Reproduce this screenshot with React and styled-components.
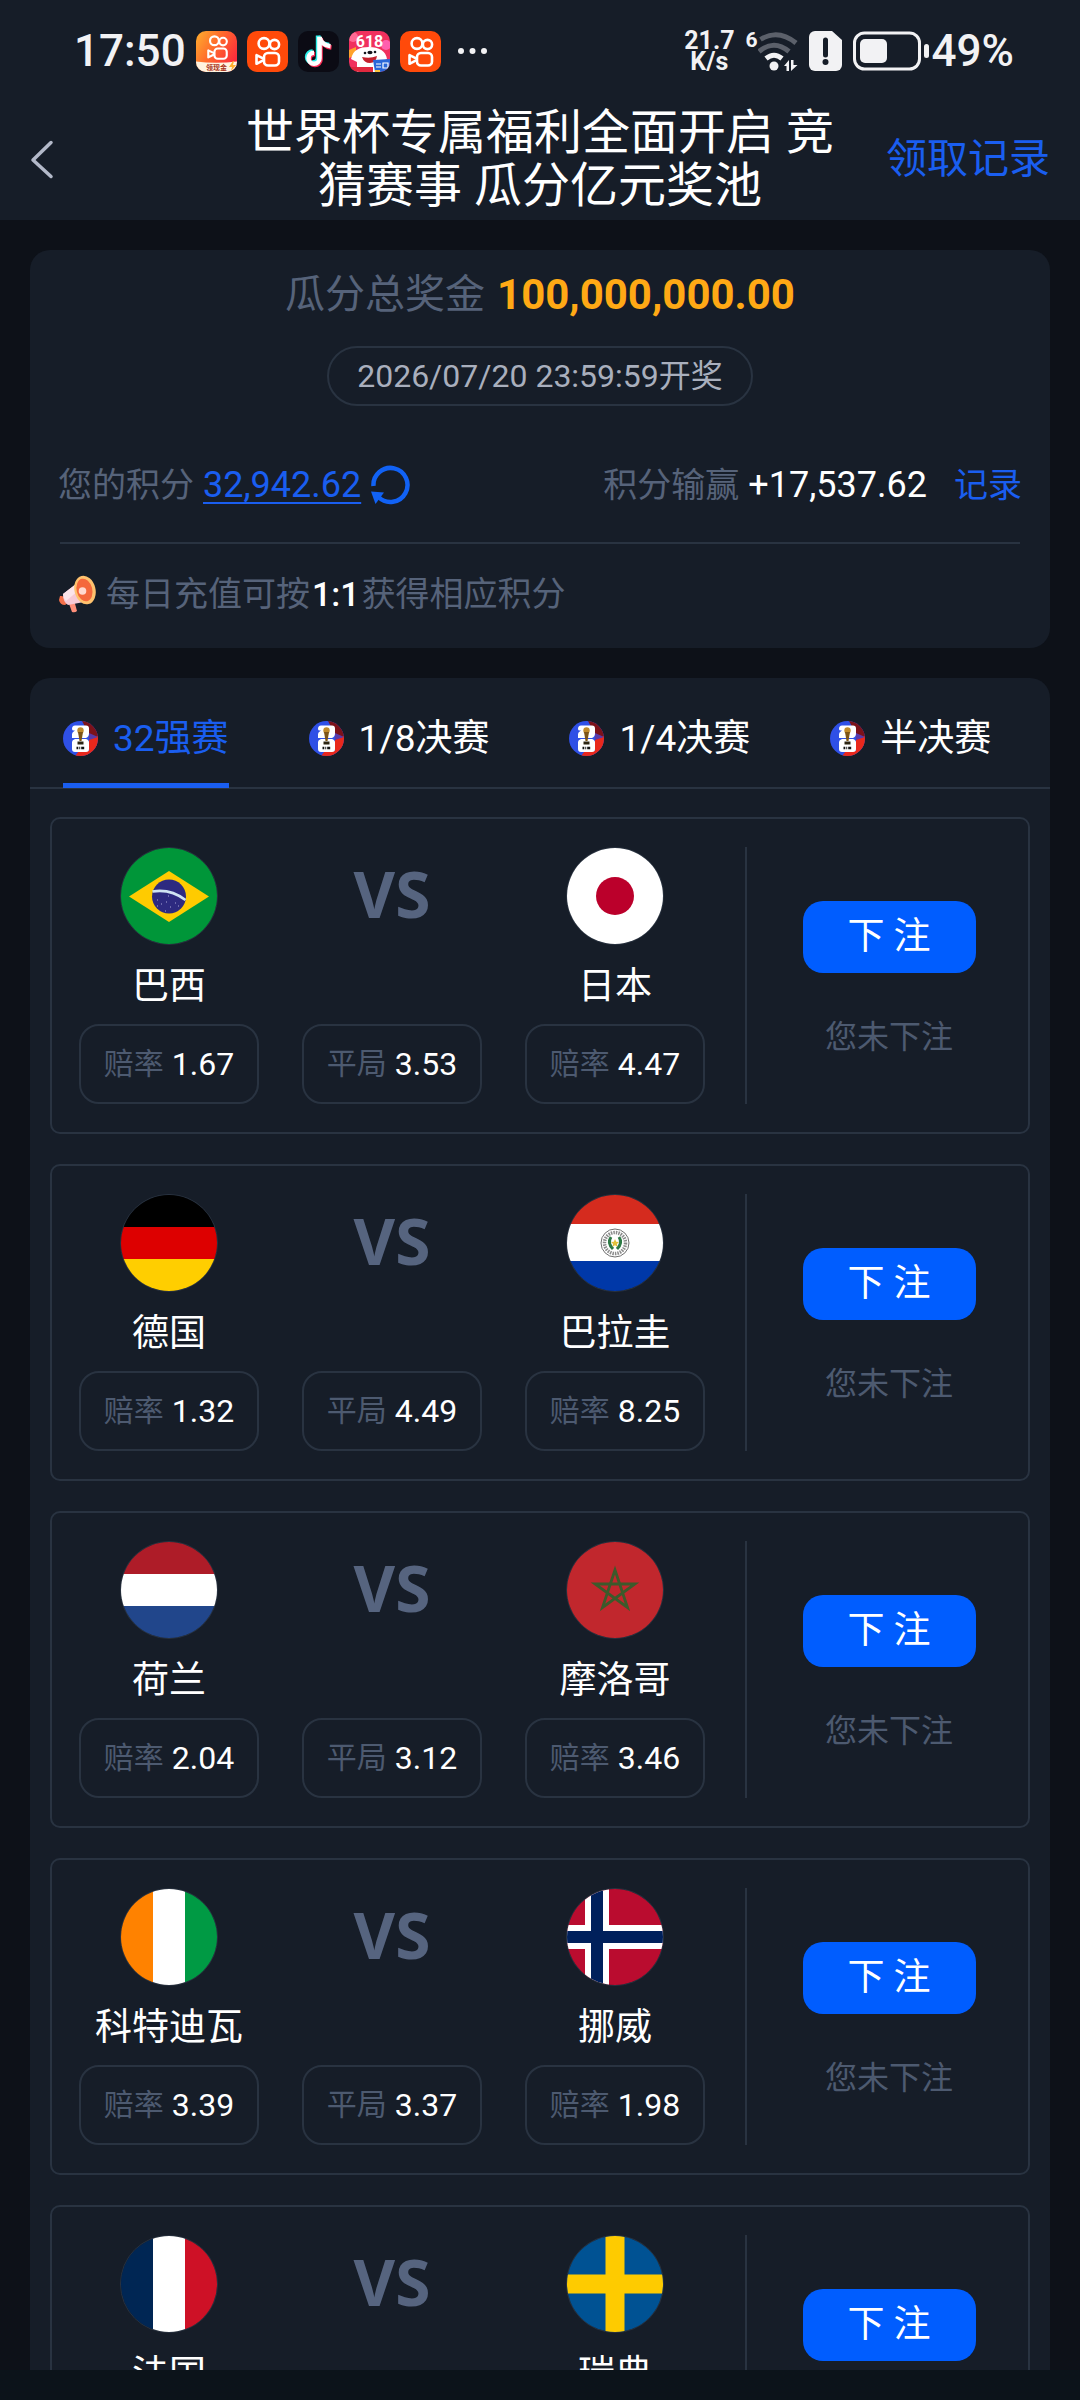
import React, { useId, useState } from "react";
import styled, { createGlobalStyle } from "styled-components";

const c = {
  page: "#0d1118",
  panel: "#161d28",
  line: "#293341",
  muted: "#56637a",
  faint: "#4d5a70",
  blue: "#1a5ef0",
  button: "#005dff",
  white: "#ffffff",
  status: "#f2f2f4",
};

const GlobalStyle = createGlobalStyle`
  * { box-sizing: border-box; }
  body {
    margin: 0;
    background: ${c.page};
    color: ${c.white};
    font-family: Roboto, "Noto Sans CJK SC", sans-serif;
  }
  button { font: inherit; color: inherit; background: none; border: 0; padding: 0; cursor: pointer; }
  a { color: ${c.blue}; text-decoration: none; }
  p, h1 { margin: 0; font-weight: 400; }
  svg { display: block; flex: none; }
`;

const Screen = styled.div`
  height: 100vh;
  display: flex;
  flex-direction: column;
`;

const StatusBar = styled.div`
  flex: none;
  height: 100px;
  padding: 2px 66px 0 74px;
  display: flex;
  justify-content: space-between;
  align-items: center;
  background: ${c.panel};
  color: ${c.status};
`;

const StatusGroup = styled.div`
  display: flex;
  align-items: center;
  gap: ${(p) => p.$gap}px;
`;

const StatusText = styled.span`
  font-size: 44px;
  line-height: 50px;
  font-weight: 500;
`;

const NetSpeed = styled.span`
  display: flex;
  flex-direction: column;
  align-items: center;
  font-size: 25px;
  line-height: 21px;
  font-weight: 700;
`;

const WifiGroup = styled.span`
  display: flex;
  align-items: flex-start;
`;

const WifiGeneration = styled.span`
  font-size: 21px;
  line-height: 20px;
  font-weight: 700;
`;

const Header = styled.header`
  flex: none;
  min-height: 120px;
  padding: 0 30px 2px;
  display: grid;
  grid-template-columns: 1fr auto 1fr;
  align-items: center;
  background: ${c.panel};
`;

const BackButton = styled.button`
  justify-self: start;
`;

const Title = styled.h1`
  max-width: 600px;
  text-align: center;
  font-size: 48px;
  line-height: 53px;
`;

const ClaimLink = styled.a`
  justify-self: end;
  font-size: 41px;
  line-height: 50px;
`;

const Content = styled.main`
  flex: 1;
  min-height: 0;
  padding: 30px 30px 0;
  overflow-y: auto;
  scrollbar-width: none;
`;

const BottomInset = styled.div`
  flex: none;
  height: 30px;
  background: #0c131a;
`;

const Panel = styled.section`
  background: ${c.panel};
  border-radius: 20px;
`;

const PrizePanel = styled(Panel)`
  margin-bottom: 30px;
  padding: 20px 28px 29px;
  display: flex;
  flex-direction: column;
`;

const PrizeTotal = styled.p`
  display: flex;
  justify-content: center;
  align-items: center;
  gap: 12px;
  font-size: 40px;
  line-height: 50px;
  color: ${c.muted};
`;

const PrizeAmount = styled.strong`
  font-size: 42px;
  font-weight: 700;
  color: #ffa915;
`;

const DrawTime = styled.p`
  align-self: center;
  margin-top: 26px;
  padding: 0 28px;
  border: 2px solid ${c.line};
  border-radius: 30px;
  font-size: 32px;
  line-height: 56px;
  color: #a9afbd;
`;

const PointsRow = styled.div`
  margin-top: 54px;
  display: flex;
  justify-content: space-between;
  font-size: 34px;
  line-height: 50px;
  color: ${c.muted};
`;

const PointsGroup = styled.div`
  display: flex;
  align-items: center;
  gap: 9px;
`;

const PointsLink = styled.a`
  font-size: 36px;
  text-decoration: underline;
  text-decoration-thickness: 2px;
  text-underline-offset: 5px;
`;

const PointsDelta = styled.span`
  margin-right: 18px;
  font-size: 36px;
  color: ${c.white};
`;

const Divider = styled.hr`
  width: calc(100% - 4px);
  height: 2px;
  margin: 32px 2px 25px;
  border: 0;
  background: ${c.line};
`;

const Notice = styled.p`
  display: flex;
  align-items: center;
  gap: 10px;
  font-size: 34px;
  line-height: 50px;
  color: ${c.muted};
`;

const Ratio = styled.strong`
  margin: 0 2px;
  font-weight: 500;
  color: ${c.white};
`;

const Tabs = styled.nav`
  padding: 0 33px;
  display: flex;
  gap: 80px;
  border-bottom: 2px solid ${c.line};
`;

const Tab = styled.button`
  height: 110px;
  margin-bottom: -1px;
  padding-top: 16px;
  display: flex;
  align-items: center;
  gap: 15px;
  white-space: nowrap;
  font-size: 37px;
  line-height: 50px;
  color: ${(p) => (p.$active ? c.blue : c.white)};
  border-bottom: 5px solid ${(p) => (p.$active ? c.blue : "transparent")};
`;

const MatchList = styled.div`
  padding: 28px 20px 30px;
  display: flex;
  flex-direction: column;
  gap: 30px;
`;

const MatchCard = styled.article`
  padding: 28px 0 28px 27px;
  display: flex;
  border: 2px solid ${c.line};
  border-radius: 10px;
`;

const Sides = styled.div`
  flex: 1;
  padding-right: 40px;
  display: grid;
  grid-template-columns: repeat(3, minmax(0, 1fr));
  column-gap: 43px;
`;

const Side = styled.div`
  display: flex;
  flex-direction: column;
  align-items: center;
`;

const Flag = styled.span`
  width: 98px;
  height: 98px;
  border: 1px solid ${c.line};
  border-radius: 50%;
  overflow: hidden;
`;

const TeamName = styled.span`
  margin: 16px 0 12px;
  white-space: nowrap;
  font-size: 37px;
  line-height: 51px;
`;

const Versus = styled.span`
  font-family: "Open Sans", sans-serif;
  font-size: 64px;
  line-height: 94px;
  font-weight: 700;
  color: #56647f;
`;

const OddsBox = styled.div`
  width: 100%;
  height: 80px;
  margin-top: auto;
  display: flex;
  justify-content: center;
  align-items: center;
  gap: 8px;
  border: 2px solid ${c.line};
  border-radius: 20px;
  font-size: 30px;
  line-height: 50px;
  color: ${c.faint};
`;

const OddsValue = styled.span`
  font-size: 32px;
  color: ${c.white};
`;

const BetSide = styled.div`
  width: 283px;
  padding: 54px 0 0 3px;
  display: flex;
  flex-direction: column;
  align-items: center;
  gap: 39px;
  border-left: 2px solid ${c.line};
`;

const BetButton = styled.button`
  width: 173px;
  height: 72px;
  border-radius: 20px;
  background: ${c.button};
  font-size: 37px;
  line-height: 50px;
  white-space: pre;
`;

const BetState = styled.span`
  font-size: 32px;
  line-height: 50px;
  color: ${c.faint};
`;

/* ---------- status bar icons ---------- */

const KwaiMark = () => (
  <g fill="none" stroke="#fff" strokeWidth="2.6">
    <circle cx="17" cy="12.5" r="5.4" />
    <circle cx="27.5" cy="13.5" r="4.6" />
    <rect x="17" y="22" width="15" height="12.5" rx="4" />
    <path d="M9.5 24.2v8.6l7-3.6v-1.6z" strokeLinejoin="round" />
  </g>
);

const KwaiIcon = () => (
  <svg width="41" height="41" viewBox="0 0 41 41" aria-hidden="true">
    <rect width="41" height="41" rx="10" fill="#ff4a0a" />
    <KwaiMark />
  </svg>
);

const KwaiLiteIcon = () => {
  const id = useId();
  return (
    <svg width="41" height="41" viewBox="0 0 41 41" aria-hidden="true">
      <defs>
        <linearGradient id={id} x1="0" y1="0" x2="1" y2="0.6">
          <stop offset="0" stopColor="#ffb02e" />
          <stop offset="0.5" stopColor="#ff6a2c" />
          <stop offset="1" stopColor="#fb2d3c" />
        </linearGradient>
        <clipPath id={id + "c"}><rect width="41" height="41" rx="10" /></clipPath>
      </defs>
      <g clipPath={`url(#${id}c)`}>
        <rect width="41" height="41" fill={`url(#${id})`} />
        <path d="M0 30.5q20 2.5 41 0V41H0z" fill="#fff3e0" />
        <path d="M37 30l-4 6h3l-1 4 5-6h-3l1-4z" fill="#ffb02e" />
      </g>
      <g transform="translate(4.5 -.5) scale(.82)"><KwaiMark /></g>
      <text x="20.5" y="38.5" textAnchor="middle" fontSize="7" fontWeight="700" fill="#a8341c">领现金</text>
    </svg>
  );
};

const note = "M20.5 5.5v21.5a5.5 5.5 0 1 1-5.5-5.5";

const DouyinIcon = () => (
  <svg width="41" height="41" viewBox="0 0 41 41" aria-hidden="true">
    <rect width="41" height="41" rx="10" fill="#0b0b14" />
    <g fill="none" strokeWidth="4.6">
      <g stroke="#2af0ea" transform="translate(-.4 -1)"><path d={note} /><path d="M20.5 6q2 8 11 9" /></g>
      <g stroke="#fb2c55" transform="translate(2 1.5)"><path d={note} /><path d="M20.5 6q2 8 11 9" /></g>
      <g stroke="#fff" transform="translate(1 .3)"><path d={note} /><path d="M20.5 6q2 8 11 9" /></g>
    </g>
  </svg>
);

const JdIcon = () => {
  const id = useId();
  return (
    <svg width="41" height="41" viewBox="0 0 41 41" aria-hidden="true">
      <clipPath id={id}><rect width="41" height="41" rx="10" /></clipPath>
      <g clipPath={`url(#${id})`}>
        <rect width="41" height="41" fill="#f0315e" />
        <circle cx="4" cy="6" r="5" fill="#ff6a94" />
        <circle cx="37" cy="14" r="5" fill="#ff5fae" />
        <path d="M0 19l7-3v8l-7 3z" fill="#ffa22b" />
        <path d="M2 28c2-9 8-12 18-12s17 4 18 12l-6 3v10H8V31z" fill="#fff" />
        <circle cx="16" cy="22" r="1.3" fill="#15151c" />
        <circle cx="26" cy="21" r="1.3" fill="#15151c" />
        <ellipse cx="21" cy="21.5" rx="2.6" ry="1.8" fill="#15151c" />
        <path d="M13 26q8 2 15-1-1 7-7 7-6 0-8-6z" fill="#c4202c" />
        <path d="M0 36h24v5H0z" fill="#e0293f" />
        <path d="M24 29l17-1v13H26z" fill="#2a67d8" />
        <path d="M27 33h5m-5 3h5m2-4h5v5h-5z" stroke="#fff" strokeWidth="1.2" fill="none" />
        <path d="M26 39h5v2h-5z" fill="#ffc53b" />
      </g>
      <text x="20.5" y="16" textAnchor="middle" fontSize="16" fontWeight="700" fill="#fff">618</text>
    </svg>
  );
};

const MoreDots = () => (
  <svg width="37" height="8" viewBox="0 0 37 8" fill={c.status} aria-hidden="true">
    <circle cx="10" cy="4" r="3" />
    <circle cx="21.500" cy="4" r="3" />
    <circle cx="33" cy="4" r="3" />
  </svg>
);

const WifiIcon = () => (
  <svg width="40" height="42" viewBox="11 0 40 42" aria-hidden="true">
    <g fill="none" strokeWidth="5">
      <path d="M13.5 9.5Q31 -1.5 49 13" stroke="#5b606a" />
      <path d="M12 21.5Q27 9 42 21.5" stroke="#5b606a" />
      <path d="M19 28.5q8-6.5 16 0" stroke={c.status} />
    </g>
    <circle cx="27" cy="36" r="4.5" fill={c.status} />
    <path d="M37 36l5-6v11h-2.5v-5zM44 30h2.5v5h4L44 41z" fill={c.status} />
  </svg>
);

const SimAlertIcon = () => (
  <svg width="33" height="40" viewBox="0 0 33 40" aria-hidden="true">
    <path d="M6 0h17l10 9v25a6 6 0 0 1-6 6H6a6 6 0 0 1-6-6V6a6 6 0 0 1 6-6z" fill={c.status} />
    <path d="M16.5 9v15" stroke={c.panel} strokeWidth="5" strokeLinecap="round" />
    <circle cx="16.5" cy="31" r="3" fill={c.panel} />
  </svg>
);

const BatteryIcon = () => (
  <svg width="77" height="40" viewBox="0 0 77 40" aria-hidden="true">
    <rect x="1.5" y="2" width="65" height="36" rx="10" fill="none" stroke={c.status} strokeWidth="3" />
    <rect x="7" y="8" width="27" height="24" rx="5" fill={c.status} />
    <rect x="71" y="13" width="5" height="14" rx="2.5" fill={c.status} />
  </svg>
);

/* ---------- page icons ---------- */

const BackIcon = () => (
  <svg width="24" height="40" viewBox="0 0 24 40" fill="none" stroke="#b3b9c9" strokeWidth="3.5" strokeLinecap="round" strokeLinejoin="round" aria-hidden="true">
    <path d="M21 3.5L3 21l18 16.5" />
  </svg>
);

const RefreshIcon = () => (
  <svg width="40" height="40" viewBox="0 0 40 40" aria-hidden="true">
    <path d="M3.5 21A17 17 0 1 1 8.5 32" fill="none" stroke="#1162f5" strokeWidth="4.5" />
    <path d="M1 26.5l13 1L5.5 39z" fill="#1162f5" />
  </svg>
);

const MegaphoneIcon = () => (
  <svg width="38" height="38" viewBox="0 0 38 38" aria-hidden="true">
    <path d="M10 26l6-1 3 11q-2 2-5 1z" fill="#ff8f7a" />
    <path d="M2 21q6-1 8 7l-3 2q-5 0-6-5z" fill="#f4704a" />
    <path d="M5 19L18 9l8 18-16 3q-5-3-5-11z" fill="#f6c9d6" />
    <path d="M5 19L18 9l3 6-13 11q-3-3-3-7z" fill="#fbe4ea" />
    <ellipse cx="27" cy="15" rx="10.5" ry="14.5" transform="rotate(-14 27 15)" fill="#ffc26e" />
    <ellipse cx="26.5" cy="15" rx="7.8" ry="11.5" transform="rotate(-14 26.5 15)" fill="#f4683c" />
    <circle cx="24.5" cy="16" r="3.8" fill="#ffd9cf" />
  </svg>
);

const CupBadge = () => {
  const id = useId();
  return (
    <svg width="35" height="35" viewBox="0 0 35 35" aria-hidden="true">
      <clipPath id={id}><circle cx="17.5" cy="17.5" r="17.5" /></clipPath>
      <g clipPath={`url(#${id})`}>
        <rect width="35" height="35" fill="#2f50e6" />
        <path d="M19 0h16v17l-9-4z" fill="#7c1219" />
        <path d="M26 18l9-3v20H12l4-5h10z" fill="#e8281c" />
        <path d="M26 12l9 4-9 3z" fill="#5a3aa8" />
      </g>
      <path d="M12 4.5h11q3 0 3 3v5q0 3-3 4.5H9v-4q0-2 3-3.5-3 .5-3-1.5 0-3.5 3-3.5zM12 18h11q3 1 3 3.5V28q0 3-3 3H12q-3 0-3-3v-7q0-2 3-3z" fill="#fff" />
      <circle cx="17.5" cy="9.5" r="3.2" fill="#c08a2b" />
      <path d="M15 11h5l-1.5 9h-2z" fill="#7d5417" />
      <path d="M14.5 20.5h6v3h-6z" fill="#2b2412" />
      <path d="M13.5 27h1.800m1 0h.9m1 0h3" stroke="#111" strokeWidth="2.4" />
    </svg>
  );
};

/* ---------- flags, drawn on a 96 x 96 field ---------- */

const Stripes = ({ colors, stops = [0, 32, 64, 96], vertical }) =>
  colors.map((fill, i) => {
    const from = stops[i];
    const size = stops[i + 1] - from;
    return vertical
      ? <rect key={fill} x={from} y="0" width={size} height="96" fill={fill} />
      : <rect key={fill} x="0" y={from} width="96" height={size} fill={fill} />;
  });

const flags = {
  brazil: (
    <>
      <path d="M0 0h96v96H0z" fill="#009639" />
      <path d="M48 23l40 25.5L48 74 8 48.5z" fill="#ffcb00" />
      <circle cx="48" cy="48.5" r="17" fill="#2d2a80" />
      <path d="M31.5 43.5q18-3 33 8.5" stroke="#cfe3f2" strokeWidth="2.6" fill="none" />
      <path d="M36 52h1m3 4h1m4-2h1m3 5h1m4-4h1m2 3h1m-14 5h1m-9-5h1m10-10h1" stroke="#a9a6d6" strokeWidth="1" />
    </>
  ),
  japan: (
    <>
      <path d="M0 0h96v96H0z" fill="#fff" />
      <circle cx="48" cy="48" r="19" fill="#bb002b" />
    </>
  ),
  germany: <Stripes colors={["#000000", "#dd0000", "#ffce00"]} />,
  paraguay: (
    <>
      <Stripes colors={["#d52b1e", "#ffffff", "#0038a8"]} stops={[0, 29, 66, 96]} />
      <g fill="none">
        <circle cx="48" cy="48" r="14" stroke="#6f6f6f" strokeWidth="1" />
        <circle cx="48" cy="48" r="10.5" stroke="#8b8b8b" strokeWidth="3.5" strokeDasharray="1.5 1" />
        <path d="M44 42q-4 6 2 12m6-12q4 6-2 12" stroke="#2d7a45" strokeWidth="3" />
      </g>
      <path d="M48 44l1.2 2.7 2.8.3-2.1 2 .6 2.8L48 50.3l-2.5 1.5.6-2.8-2.1-2 2.8-.3z" fill="#e2c33c" />
    </>
  ),
  netherlands: <Stripes colors={["#ae1c28", "#ffffff", "#21468b"]} />,
  morocco: (
    <>
      <path d="M0 0h96v96H0z" fill="#c1272d" />
      <path d="M48 28l12.5 37.5L28 42h40L35.5 65.5z" fill="none" stroke="#3c5a2b" strokeWidth="2.8" />
    </>
  ),
  ivoryCoast: <Stripes colors={["#ff8200", "#ffffff", "#009a44"]} vertical />,
  norway: (
    <>
      <path d="M0 0h96v96H0z" fill="#ba0c2f" />
      <path d="M30 0v96M0 48h96" stroke="#fff" strokeWidth="24" />
      <path d="M30 0v96M0 48h96" stroke="#00205b" strokeWidth="12" />
    </>
  ),
  france: <Stripes colors={["#002654", "#ffffff", "#ce1126"]} vertical />,
  sweden: (
    <>
      <path d="M0 0h96v96H0z" fill="#005293" />
      <path d="M48 0v96M0 48h96" stroke="#fecb00" strokeWidth="19" />
    </>
  ),
};

/* ---------- data ---------- */

const rounds = ["32强赛", "1/8决赛", "1/4决赛", "半决赛"];

const matches = [
  { home: ["巴西", "brazil"], away: ["日本", "japan"], odds: ["1.67", "3.53", "4.47"] },
  { home: ["德国", "germany"], away: ["巴拉圭", "paraguay"], odds: ["1.32", "4.49", "8.25"] },
  { home: ["荷兰", "netherlands"], away: ["摩洛哥", "morocco"], odds: ["2.04", "3.12", "3.46"] },
  { home: ["科特迪瓦", "ivoryCoast"], away: ["挪威", "norway"], odds: ["3.39", "3.37", "1.98"] },
  { home: ["法国", "france"], away: ["瑞典", "sweden"] },
];

const Odds = ({ label, value }) =>
  value ? (
    <OddsBox>
      <span>{label}</span>
      <OddsValue>{value}</OddsValue>
    </OddsBox>
  ) : null;

const Team = ({ team: [name, flag], odds }) => (
  <Side>
    <Flag>
      <svg width="96" height="96" viewBox="0 0 96 96" aria-hidden="true">{flags[flag]}</svg>
    </Flag>
    <TeamName>{name}</TeamName>
    <Odds label="赔率" value={odds} />
  </Side>
);

const Match = ({ match: { home, away, odds = [] } }) => (
  <MatchCard>
    <Sides>
      <Team team={home} odds={odds[0]} />
      <Side>
        <Versus>VS</Versus>
        <Odds label="平局" value={odds[1]} />
      </Side>
      <Team team={away} odds={odds[2]} />
    </Sides>
    <BetSide>
      <BetButton type="button">下 注</BetButton>
      <BetState>您未下注</BetState>
    </BetSide>
  </MatchCard>
);

export default function App() {
  const [active, setActive] = useState(0);
  return (
    <Screen>
      <GlobalStyle />
      <StatusBar>
        <StatusGroup $gap={10}>
          <StatusText>17:50</StatusText>
          <KwaiLiteIcon />
          <KwaiIcon />
          <DouyinIcon />
          <JdIcon />
          <KwaiIcon />
          <MoreDots />
        </StatusGroup>
        <StatusGroup $gap={11}>
          <NetSpeed>
            <span>21.7</span>
            <span>K/s</span>
          </NetSpeed>
          <WifiGroup>
            <WifiGeneration>6</WifiGeneration>
            <WifiIcon />
          </WifiGroup>
          <SimAlertIcon />
          <StatusGroup $gap={2}>
            <BatteryIcon />
            <StatusText>49%</StatusText>
          </StatusGroup>
        </StatusGroup>
      </StatusBar>
      <Header>
        <BackButton type="button" aria-label="返回"><BackIcon /></BackButton>
        <Title>世界杯专属福利全面开启 竞猜赛事 瓜分亿元奖池</Title>
        <ClaimLink href="#claims">领取记录</ClaimLink>
      </Header>
      <Content>
        <PrizePanel>
          <PrizeTotal>
            瓜分总奖金 <PrizeAmount>100,000,000.00</PrizeAmount>
          </PrizeTotal>
          <DrawTime>2026/07/20 23:59:59开奖</DrawTime>
          <PointsRow>
            <PointsGroup>
              <span>您的积分</span>
              <PointsLink href="#points">32,942.62</PointsLink>
              <button type="button" aria-label="刷新"><RefreshIcon /></button>
            </PointsGroup>
            <PointsGroup>
              <span>积分输赢</span>
              <PointsDelta>+17,537.62</PointsDelta>
              <a href="#records">记录</a>
            </PointsGroup>
          </PointsRow>
          <Divider />
          <Notice>
            <MegaphoneIcon />
            <span>每日充值可按<Ratio>1:1</Ratio>获得相应积分</span>
          </Notice>
        </PrizePanel>
        <Panel>
          <Tabs>
            {rounds.map((round, i) => (
              <Tab key={round} type="button" $active={i === active} onClick={() => setActive(i)}>
                <CupBadge />
                {round}
              </Tab>
            ))}
          </Tabs>
          <MatchList>
            {matches.map((match) => <Match key={match.home[0]} match={match} />)}
          </MatchList>
        </Panel>
      </Content>
      <BottomInset />
    </Screen>
  );
}
